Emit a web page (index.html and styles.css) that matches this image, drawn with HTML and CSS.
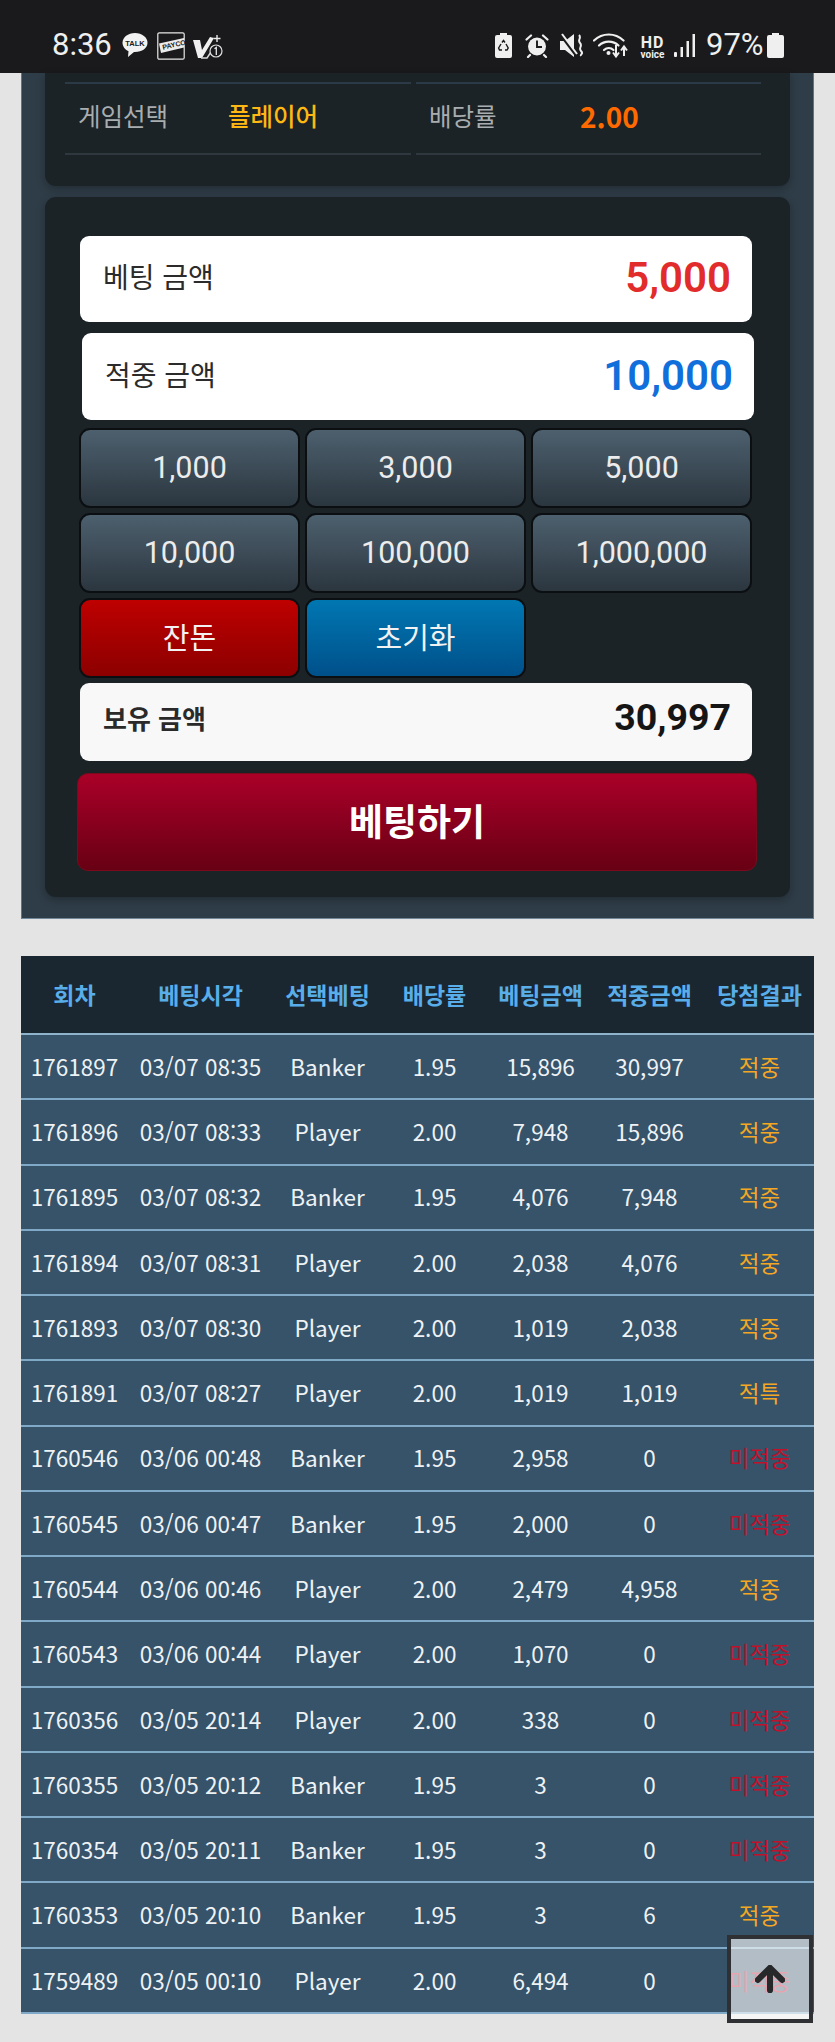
FILE: index.html
```html
<!DOCTYPE html>
<html lang="ko">
<head>
<meta charset="utf-8">
<title>베팅</title>
<link rel="stylesheet" href="styles.css">
</head>
<body>
<header class="status">
  <div class="status-left">
    <span class="clock">8:36</span>
    <svg class="ic ic-talk" viewBox="0 0 26 26"><path d="M13 1C6 1 .5 5.300 .5 10.800c0 3.600 2.400 6.700 6 8.400L6 25l6-4.900h1c7 0 12.500-4 12.500-9.300S20 1 13 1z" fill="#f2f2f2"/><text x="13" y="14.200" class="ic-talk-t">TALK</text></svg>
    <svg class="ic ic-payco" viewBox="0 0 28 28"><defs><clipPath id="pc"><rect x="0" y="0" width="28" height="28"/></clipPath></defs><rect x=".8" y=".8" width="26.400" height="26.400" rx="1.500" fill="none" stroke="#e8e8e8" stroke-width="1.200"/><g clip-path="url(#pc)"><path d="M2 11.500 27 6v9.500L4 21z" fill="#ececec"/><text x="6" y="17.800" transform="rotate(-13 6 17.800)" class="ic-payco-t">PAYCO</text></g></svg>
    <svg class="ic ic-v" viewBox="0 0 30 26"><path d="M0 6h7l2 10L17 3l4 1-12 20H5z" fill="#f0f0f0"/><path d="M8 24h6l4-6" fill="none" stroke="#d8d8d8" stroke-width="1.500"/><path d="M24 1v7M20.500 4.500h7" stroke="#e8e8e8" stroke-width="1.400"/><circle cx="23" cy="17" r="6" fill="#1a1a1c" stroke="#e0e0e0" stroke-width="1.200"/><path d="M21.500 14.800l1.800-1.300v7.500" fill="none" stroke="#e8e8e8" stroke-width="1.300"/></svg>
  </div>
  <div class="status-right">
    <svg class="ic ic-rec" viewBox="0 0 17 25"><path d="M5 0h7v2h3a2 2 0 0 1 2 2v19a2 2 0 0 1-2 2H2a2 2 0 0 1-2-2V4a2 2 0 0 1 2-2h3z" fill="#efefef"/><path d="M7 9.500 8.500 7.500l1.500 2M11 11l2.200 4-1.200 2H10M7 17H4.500l-.9-2L6 11" fill="none" stroke="#1a1a1c" stroke-width="1.400"/></svg>
    <svg class="ic ic-alarm" viewBox="0 0 24 25"><circle cx="12" cy="13.500" r="9" fill="#efefef"/><path d="M12 7.500v6.500h5" fill="none" stroke="#1a1a1c" stroke-width="1.900"/><path d="M1.500 6.500 6 2.500M22.500 6.500 18 2.500M5 22l-2 2M19 22l2 2" stroke="#efefef" stroke-width="2.200" stroke-linecap="round"/></svg>
    <svg class="ic ic-mute" viewBox="0 0 24 25"><path d="M0 8h5l9-7v23l-9-7H0z" fill="#efefef"/><path d="M1 2l15 20" stroke="#1a1a1c" stroke-width="3"/><path d="M2 1l15 20" stroke="#efefef" stroke-width="2"/><path d="M19 2c3 3-2 5 1 8s-2 5 1 8-1 3 0 5" fill="none" stroke="#efefef" stroke-width="2"/></svg>
    <svg class="ic ic-wifi" viewBox="0 0 36 26"><g fill="none" stroke="#efefef" stroke-width="2.200" stroke-linecap="round"><path d="M1 8.500c8.500-8 21-8 29.500 0"/><path d="M6 13.500c5.500-5.200 14-5.200 19.500 0"/><path d="M11 18c2.800-2.500 6.800-2.500 9.500 0"/></g><circle cx="15.500" cy="21" r="2" fill="#efefef"/><path d="M23 13v11M20 20.500l3 4 3-4M31 24V15M28 18.500l3-4 3 4" fill="none" stroke="#efefef" stroke-width="2"/></svg>
    <span class="hd"><b>HD</b><i>voice</i></span>
    <svg class="ic ic-signal" viewBox="0 0 22 23"><rect x="0" y="18" width="3" height="5" rx="1" fill="#efefef"/><rect x="6.500" y="13" width="2.500" height="10" fill="#efefef"/><rect x="12.500" y="7" width="2.500" height="16" fill="#efefef"/><rect x="18.500" y="0" width="2.500" height="23" fill="#efefef"/></svg>
    <span class="pct">97%</span>
    <svg class="ic ic-batt" viewBox="0 0 17 25"><path d="M5 0h7v2h3a2 2 0 0 1 2 2v19a2 2 0 0 1-2 2H2a2 2 0 0 1-2-2V4a2 2 0 0 1 2-2h3z" fill="#efefef"/></svg>
  </div>
</header>

<main class="panel">
  <section class="card card-info">
    <div class="info-row">
      <div class="info-cell"><span class="info-label">게임선택</span><span class="info-pick">플레이어</span></div>
      <div class="info-cell"><span class="info-label">배당률</span><span class="info-odds">2.00</span></div>
    </div>
  </section>
  <section class="card card-bet">
    <div class="amount amount-bet"><span class="amount-label">베팅 금액</span><span class="amount-val val-red">5,000</span></div>
    <div class="amount amount-win"><span class="amount-label">적중 금액</span><span class="amount-val val-blue">10,000</span></div>
    <div class="keys">
      <button class="key">1,000</button><button class="key">3,000</button><button class="key">5,000</button>
      <button class="key">10,000</button><button class="key">100,000</button><button class="key">1,000,000</button>
      <button class="key key-red">잔돈</button><button class="key key-blue">초기화</button>
    </div>
    <div class="amount amount-own"><span class="own-label">보유 금액</span><span class="own-val">30,997</span></div>
    <button class="bet-btn">베팅하기</button>
  </section>
</main>

<table class="history">
  <colgroup><col class="c1"><col class="c2"><col class="c3"><col class="c4"><col class="c5"><col class="c6"><col class="c7"></colgroup>
  <thead><tr><th>회차</th><th>베팅시각</th><th>선택베팅</th><th>배당률</th><th>베팅금액</th><th>적중금액</th><th>당첨결과</th></tr></thead>
  <tbody>
    <tr><td>1761897</td><td>03/07 08:35</td><td>Banker</td><td>1.95</td><td>15,896</td><td>30,997</td><td class="hit">적중</td></tr>
    <tr><td>1761896</td><td>03/07 08:33</td><td>Player</td><td>2.00</td><td>7,948</td><td>15,896</td><td class="hit">적중</td></tr>
    <tr><td>1761895</td><td>03/07 08:32</td><td>Banker</td><td>1.95</td><td>4,076</td><td>7,948</td><td class="hit">적중</td></tr>
    <tr><td>1761894</td><td>03/07 08:31</td><td>Player</td><td>2.00</td><td>2,038</td><td>4,076</td><td class="hit">적중</td></tr>
    <tr><td>1761893</td><td>03/07 08:30</td><td>Player</td><td>2.00</td><td>1,019</td><td>2,038</td><td class="hit">적중</td></tr>
    <tr><td>1761891</td><td>03/07 08:27</td><td>Player</td><td>2.00</td><td>1,019</td><td>1,019</td><td class="hit">적특</td></tr>
    <tr><td>1760546</td><td>03/06 00:48</td><td>Banker</td><td>1.95</td><td>2,958</td><td>0</td><td class="miss">미적중</td></tr>
    <tr><td>1760545</td><td>03/06 00:47</td><td>Banker</td><td>1.95</td><td>2,000</td><td>0</td><td class="miss">미적중</td></tr>
    <tr><td>1760544</td><td>03/06 00:46</td><td>Player</td><td>2.00</td><td>2,479</td><td>4,958</td><td class="hit">적중</td></tr>
    <tr><td>1760543</td><td>03/06 00:44</td><td>Player</td><td>2.00</td><td>1,070</td><td>0</td><td class="miss">미적중</td></tr>
    <tr><td>1760356</td><td>03/05 20:14</td><td>Player</td><td>2.00</td><td>338</td><td>0</td><td class="miss">미적중</td></tr>
    <tr><td>1760355</td><td>03/05 20:12</td><td>Banker</td><td>1.95</td><td>3</td><td>0</td><td class="miss">미적중</td></tr>
    <tr><td>1760354</td><td>03/05 20:11</td><td>Banker</td><td>1.95</td><td>3</td><td>0</td><td class="miss">미적중</td></tr>
    <tr><td>1760353</td><td>03/05 20:10</td><td>Banker</td><td>1.95</td><td>3</td><td>6</td><td class="hit">적중</td></tr>
    <tr><td>1759489</td><td>03/05 00:10</td><td>Player</td><td>2.00</td><td>6,494</td><td>0</td><td class="miss">미적중</td></tr>
  </tbody>
</table>

<a class="to-top" href="#" aria-label="맨 위로">
  <svg viewBox="0 0 32 30"><path d="M16 3 3 16M16 3l13 13M16 5v22" fill="none" stroke="#26282a" stroke-width="6.500" stroke-linecap="round" stroke-linejoin="round"/></svg>
</a>
</body>
</html>
```
FILE: styles.css
```css
* { box-sizing: border-box; }
html, body { margin: 0; padding: 0; }
body {
  position: relative;
  height: 2042px;
  overflow: hidden;
  background: #e4e4e4;
  font-family: "Noto Sans CJK KR", "Noto Sans", sans-serif;
}

/* status bar */
.status {
  height: 73px;
  background: #1a1a1c;
  display: flex;
  justify-content: space-between;
  align-items: flex-start;
  padding: 32px 51px 0 52px;
  color: #efefef;
  font-family: Roboto, sans-serif;
}
.status-left, .status-right { display: flex; align-items: flex-start; }
.ic { display: block; flex: none; }
.clock { font-size: 31px; line-height: 26px; width: 70px; }
.ic-talk { width: 26px; height: 26px; margin-right: 9px; }
.ic-talk-t { font: 700 7.500px "Liberation Sans", sans-serif; fill: #1a1a1c; text-anchor: middle; }
.ic-payco { width: 28px; height: 28px; margin-right: 8px; }
.ic-payco-t { font: 700 7px "Liberation Sans", sans-serif; fill: #1a1a1c; }
.ic-v { width: 30px; height: 26px; margin-top: 2px; }
.ic-rec { width: 17px; height: 25px; margin-top: 1px; margin-right: 13px; }
.ic-alarm { width: 24px; height: 25px; margin-top: 1px; margin-right: 11px; }
.ic-mute { width: 24px; height: 25px; margin-top: 1px; margin-right: 9px; }
.ic-wifi { width: 36px; height: 26px; margin-right: 10px; }
.hd { display: flex; flex-direction: column; align-items: center; width: 27px; margin-top: 4px; margin-right: 8px; }
.hd b { font: 700 16px/14px Roboto, sans-serif; letter-spacing: 1px; }
.hd i { font: 700 10px/9px Roboto, sans-serif; }
.ic-signal { width: 22px; height: 23px; margin-top: 2px; margin-right: 10px; }
.pct { font-size: 31px; line-height: 26px; width: 61px; }
.ic-batt { width: 17px; height: 25px; margin-top: 1px; }

/* top panel */
.panel {
  margin: 0 21px;
  padding: 0 23px 21px;
  background: #2f3d48;
  border-left: 1px solid #5f7486;
  border-right: 1px solid #5f7486;
  border-bottom: 1px solid #71879a;
}
.card {
  background: #1b2327;
  border-radius: 0 0 11px 11px;
  box-shadow: 0 3px 8px rgba(0, 0, 0, .28);
}
.card-info { height: 113px; padding: 9px 20px 0; }
.info-row { display: grid; grid-template-columns: 346px 345px; column-gap: 5px; }
.info-cell {
  height: 73px;
  display: flex;
  align-items: center;
  padding-left: 13px;
  border-top: 2px solid #2c3946;
  border-bottom: 2px solid #2f383f;
  font-size: 24.500px;
  line-height: 1;
}
.info-label { color: #a9adb0; width: 150px; margin-bottom: 4px; }
.info-pick { color: #fdb813; font-weight: 500; margin-bottom: 4px; }
.info-odds { color: #ff6a00; font: 700 28px/1 "Noto Sans CJK KR", sans-serif; margin: 0 0 5px 1px; }

/* bet card */
.card-bet {
  margin-top: 11px;
  height: 700px;
  border-radius: 11px;
  padding: 39px 38px 0 35px;
}
.amount {
  display: flex;
  justify-content: space-between;
  align-items: center;
  background: #fff;
  border-radius: 9px;
  padding: 0 21px 0 23px;
}
.amount-bet { height: 86px; }
.amount-win { height: 87px; margin: 11px -2px 0 2px; }
.amount-label { font-size: 28px; line-height: 1; color: #2b2b2b; margin-bottom: 6px; }
.amount-val { font: 600 42px/1 Roboto, sans-serif; margin-bottom: 2px; }
.val-red { color: #e22b2b; }
.val-blue { color: #116fdc; }

.keys {
  display: grid;
  grid-template-columns: repeat(3, 221px);
  column-gap: 5px;
  grid-auto-rows: 80px;
  row-gap: 5px;
  margin: 8px 0 5px -1px;
}
.key {
  border: 2px solid #0b0f12;
  border-radius: 11px;
  background: linear-gradient(#4d606e, #2b363f);
  color: #ececec;
  font: 400 30.500px/1 Roboto, "Noto Sans CJK KR", sans-serif;
  padding: 0;
}
.key-red { background: linear-gradient(#be0000, #8c0000); padding-bottom: 4px; }
.key-blue { background: linear-gradient(#0077b2, #00508a); padding-bottom: 4px; }
.key-red, .key-blue { font-family: "Noto Sans CJK KR", sans-serif; font-size: 29px; color: #f2f2f2; }

.amount-own { height: 78px; background: #f8f8f8; padding: 0 21px 0 23px; }
.own-label { font-size: 26px; line-height: 1; font-weight: 700; color: #2a2a2a; margin-bottom: 8px; }
.own-val { font: 700 37.500px/1 Roboto, sans-serif; color: #151515; margin-bottom: 8px; }

.bet-btn {
  display: block;
  width: 680px;
  height: 98px;
  margin: 12px 0 0 -3px;
  border: 1px solid #7a0a1c;
  border-radius: 11px;
  background: linear-gradient(#aa0028, #680014);
  color: #fff;
  font: 700 37px/1 "Noto Sans CJK KR", sans-serif;
  padding: 0 0 4px;
}

/* history table */
.history {
  width: 793px;
  margin: 37px 21px 0;
  table-layout: fixed;
  border-collapse: separate;
  border-spacing: 0;
  font-size: 22.500px;
  color: #eef2f5;
}
.c1 { width: 107px; }
.c2 { width: 145px; }
.c3 { width: 109px; }
.c4 { width: 105px; }
.c5 { width: 107px; }
.c6 { width: 111px; }
.c7 { width: 109px; }
.history th {
  height: 79px;
  padding: 0;
  background: #1a2731;
  color: #59aeea;
  font-size: 23px;
  font-weight: 700;
  border-bottom: 2px solid #8fb3cb;
  line-height: 1;
}
.history td {
  height: 65.270px;
  padding: 0 0 1px;
  text-align: center;
  background: #36536a;
  border-bottom: 2px solid #7fa9c6;
  line-height: 1;
}
.history td.hit { color: #f5a623; }
.history td.miss { color: #c0102a; }

/* scroll-to-top overlay */
.to-top {
  position: absolute;
  left: 727px;
  top: 1935px;
  width: 86px;
  height: 88px;
  border: 4px solid #2e3033;
  background: rgba(255, 255, 255, .62);
  display: flex;
  align-items: center;
  justify-content: center;
}
.to-top svg { width: 30px; height: 28px; display: block; }
```
